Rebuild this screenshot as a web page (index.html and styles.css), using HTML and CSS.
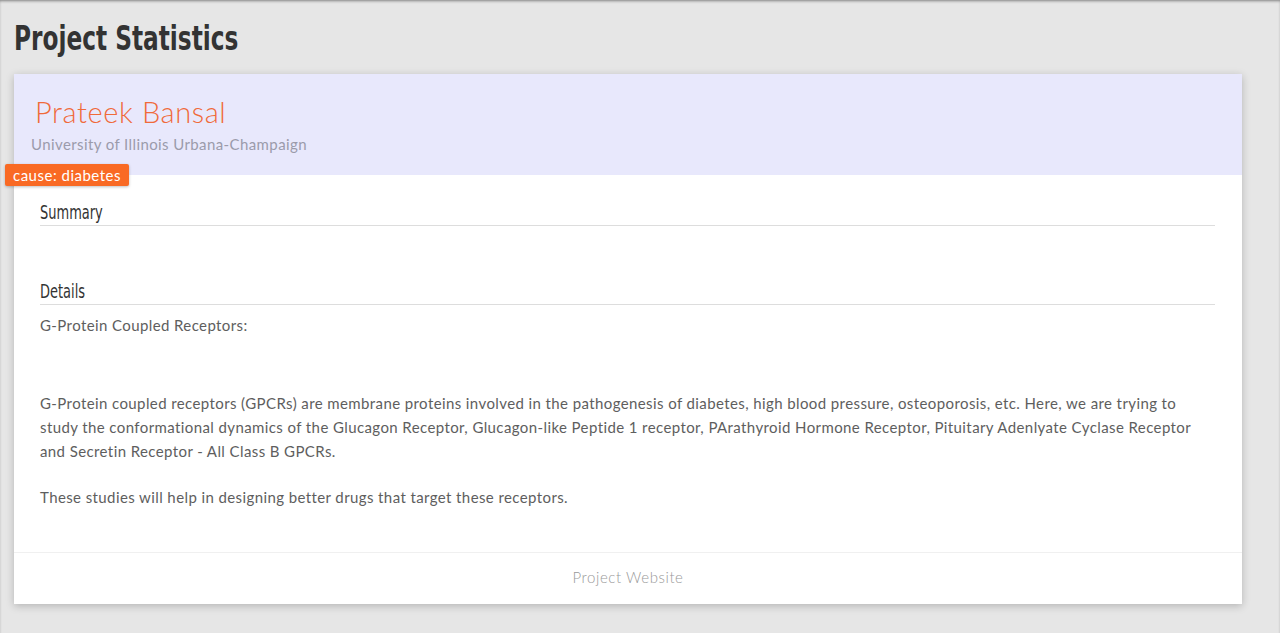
FILE: index.html
```html
<!DOCTYPE html>
<html>
<head>
<meta charset="utf-8">
<link rel="stylesheet" href="styles.css">
</head>
<body>
<div class="page">
  <h1 class="title"><span class="narrow">Project Statistics</span></h1>
  <div class="card">
    <div class="card-head">
      <div class="name">Prateek Bansal</div>
      <div class="uni">University of Illinois Urbana-Champaign</div>
      <span class="badge">cause: diabetes</span>
    </div>
    <div class="card-body">
      <h2 class="sec"><span class="narrow">Summary</span></h2>
      <div class="sec-gap"></div>
      <h2 class="sec"><span class="narrow">Details</span></h2>
      <div class="text">
        <p>G-Protein Coupled Receptors:</p>
        <p class="blank">&nbsp;</p>
        <p>G-Protein coupled receptors (GPCRs) are membrane proteins involved in the pathogenesis of diabetes, high blood pressure, osteoporosis, etc. Here, we are trying to study the conformational dynamics of the Glucagon Receptor, Glucagon-like Peptide 1 receptor, PArathyroid Hormone Receptor, Pituitary Adenlyate Cyclase Receptor and Secretin Receptor - All Class B GPCRs.</p>
        <p>These studies will help in designing better drugs that target these receptors.</p>
      </div>
    </div>
    <div class="card-foot">Project Website</div>
  </div>
</div>
</body>
</html>
```
FILE: styles.css
```css
html, body {
  margin: 0;
  padding: 0;
  background: #e6e6e6;
}
body {
  min-height: 633px;
  box-shadow: inset 0 2px 3px -1px rgba(0,0,0,0.45);
}
.page {
  padding: 20px 38px 30px 14px;
}
.narrow {
  display: inline-block;
  transform: scaleX(0.76);
  transform-origin: left center;
  white-space: nowrap;
}
.title {
  margin: 0 0 18px 0;
  font-family: "DejaVu Sans Condensed", sans-serif;
  font-weight: 700;
  font-size: 34px;
  line-height: 36px;
  color: #333;
}
.card {
  background: #fff;
  box-shadow: 0 2px 8px rgba(0,0,0,0.22);
}
.card-head {
  position: relative;
  background: #e8e8fc;
  height: 101px;
  padding: 20px 0 0 17px;
  box-sizing: border-box;
}
.name {
  font-family: Lato, "Open Sans", sans-serif;
  font-weight: 300;
  font-size: 29px;
  line-height: 36px;
  letter-spacing: 0.6px;
  color: #f06a3a;
  margin-left: 4px;
}
.uni {
  font-family: Lato, "Open Sans", sans-serif;
  font-weight: 400;
  font-size: 15px;
  line-height: 20px;
  letter-spacing: 0.4px;
  color: #9b9bab;
  margin-top: 4px;
}
.badge {
  position: absolute;
  left: -9px;
  top: 90px;
  background: #f96a24;
  color: #fff;
  font-family: Lato, "Open Sans", sans-serif;
  font-size: 15px;
  line-height: 22px;
  letter-spacing: 0.5px;
  padding: 0 8px;
  border-radius: 2px;
  box-shadow: 0 1px 3px rgba(0,0,0,0.25);
}
.card-body {
  padding: 26px 27px 43px 26px;
}
.sec {
  margin: 0;
  font-family: "DejaVu Sans Condensed", sans-serif;
  font-weight: 400;
  font-size: 19px;
  line-height: 22px;
  color: #333;
  padding-bottom: 2px;
  border-bottom: 1px solid #ddd;
}
.sec-gap {
  height: 54px;
}
.text {
  font-family: Lato, "Open Sans", sans-serif;
  font-size: 15px;
  line-height: 24px;
  letter-spacing: 0.4px;
  color: #5e5e5e;
  padding: 8px 8px 0 0;
}
.text p {
  margin: 0 0 22px 0;
}
.text p.blank {
  height: 32px;
  margin: 0;
  overflow: hidden;
}
.text p:last-child {
  margin-bottom: 0;
}
.card-foot {
  border-top: 1px solid #f0f0f0;
  text-align: center;
  font-family: Lato, "Open Sans", sans-serif;
  font-weight: 300;
  font-size: 15px;
  line-height: 48px;
  padding-bottom: 3px;
  letter-spacing: 0.6px;
  color: #999;
}
```
